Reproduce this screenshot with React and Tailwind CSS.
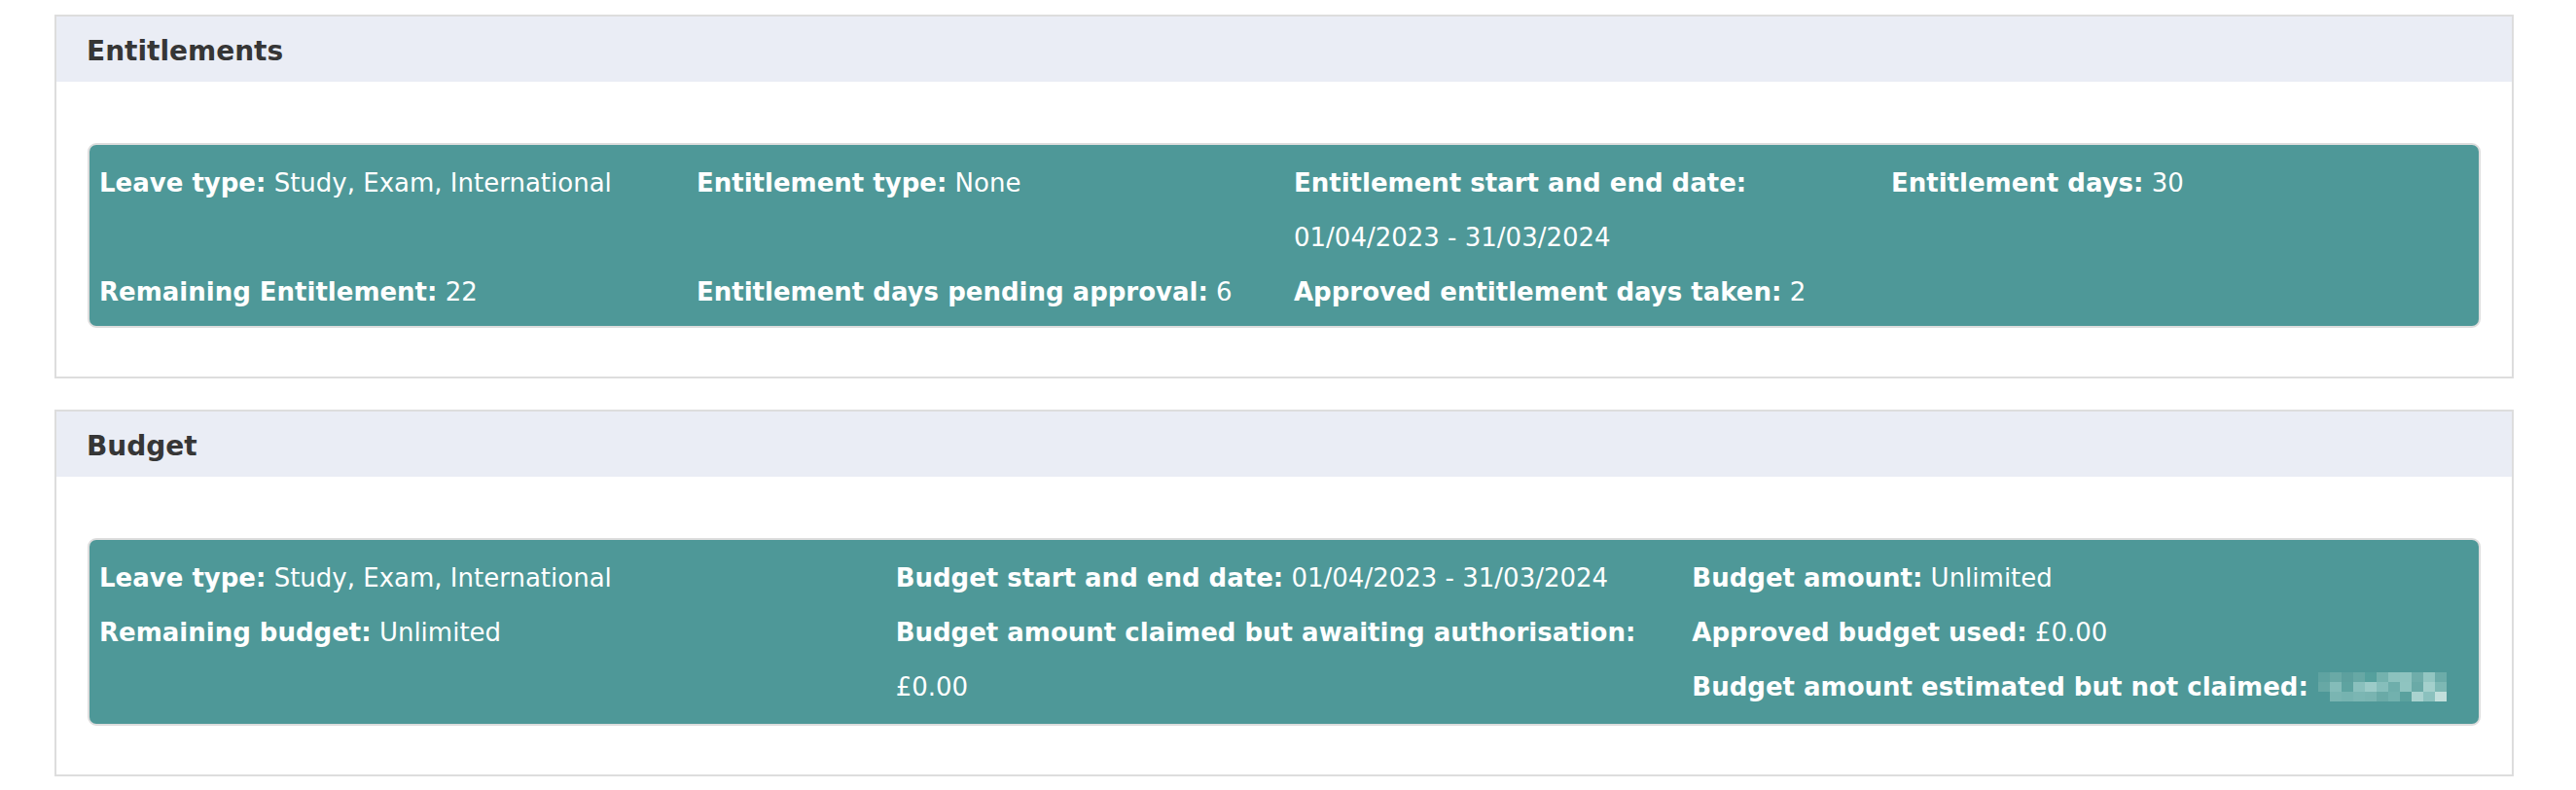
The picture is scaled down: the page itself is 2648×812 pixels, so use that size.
import React from 'react';

const entitlementItems = [
  { label: 'Leave type:', value: 'Study, Exam, International' },
  { label: 'Entitlement type:', value: 'None' },
  { label: 'Entitlement start and end date:', value: '01/04/2023 - 31/03/2024', wrap: true },
  { label: 'Entitlement days:', value: '30' },
  { label: 'Remaining Entitlement:', value: '22' },
  { label: 'Entitlement days pending approval:', value: '6' },
  { label: 'Approved entitlement days taken:', value: '2' },
];

const budgetColumns = [
  [
    { label: 'Leave type:', value: 'Study, Exam, International' },
    { label: 'Remaining budget:', value: 'Unlimited' },
  ],
  [
    { label: 'Budget start and end date:', value: '01/04/2023 - 31/03/2024' },
    { label: 'Budget amount claimed but awaiting authorisation:', value: '£0.00', wrap: true },
  ],
  [
    { label: 'Budget amount:', value: 'Unlimited' },
    { label: 'Approved budget used:', value: '£0.00' },
    { label: 'Budget amount estimated but not claimed:', value: null },
  ],
];

// pixelated (redacted) value
const mosaic = [
  ['#5fa3a1', '#6aa9a6', '#5da09e', '#67a8a5', '#55a09d', '#74b2ae', '#8cc2be', '#8ec3bf', '#6fadaa', '#93c6c2', '#6caca9'],
  ['#67a8a5', '#84bcb9', '#5ea3a0', '#8ac0bd', '#9ccbc8', '#86bebb', '#6eaeab', '#8fc4c0', '#6aaaa7', '#a4d0cc', '#7db8b4'],
  ['#4e9898', '#7ab5b2', '#76b3b0', '#7bb6b3', '#79b4b1', '#6aaaa7', '#72b1ae', '#5aa19e', '#a9d2cf', '#8bc1be', '#c2dfdc'],
];

function Redacted() {
  return (
    <span className="inline-flex flex-col align-middle ml-[2px] -mt-[4px]">
      {mosaic.map((row, r) => (
        <span key={r} className="flex">
          {row.map((c, i) => (
            <span key={i} className="w-[12px] h-[10px]" style={{ backgroundColor: c }} />
          ))}
        </span>
      ))}
    </span>
  );
}

function Item({ label, value, wrap }) {
  return (
    <div className="whitespace-nowrap">
      <span className="font-bold">{label}</span>
      {wrap ? <br /> : ' '}
      {value === null ? <Redacted /> : value}
    </div>
  );
}

function Panel({ title, children, extra = '' }) {
  return (
    <div className="border-2 border-[#dddddd] bg-white">
      <div className="bg-[#eaedf5] h-[67px] flex items-center px-[31px] pt-[4px]">
        <h2 className="text-[28px] font-bold text-[#363636]">{title}</h2>
      </div>
      <div className="px-[32px] pt-[63px] pb-[50px]">
        <div className={`bg-[#4e9898] border-2 border-[#dddddd] rounded-[9px] text-white text-[26px] leading-[56px] pt-[11px] ${extra}`}>
          {children}
        </div>
      </div>
    </div>
  );
}

export default function App() {
  return (
    <div
      className="min-h-screen bg-white pt-[15px] pl-[56px] pr-[64px]"
      style={{ fontFamily: '"DejaVu Sans", Verdana, sans-serif' }}
    >
      <Panel title="Entitlements" extra="pb-[7px]">
        <div className="grid grid-cols-4">
          {entitlementItems.map((item) => (
            <div key={item.label} className="pl-[10px]">
              <Item {...item} />
            </div>
          ))}
        </div>
      </Panel>

      <div className="h-[32px]" />

      <Panel title="Budget" extra="pb-[10px]">
        <div className="grid grid-cols-3">
          {budgetColumns.map((col, i) => (
            <div key={i} className="pl-[10px]">
              {col.map((item) => (
                <Item key={item.label} {...item} />
              ))}
            </div>
          ))}
        </div>
      </Panel>
    </div>
  );
}
